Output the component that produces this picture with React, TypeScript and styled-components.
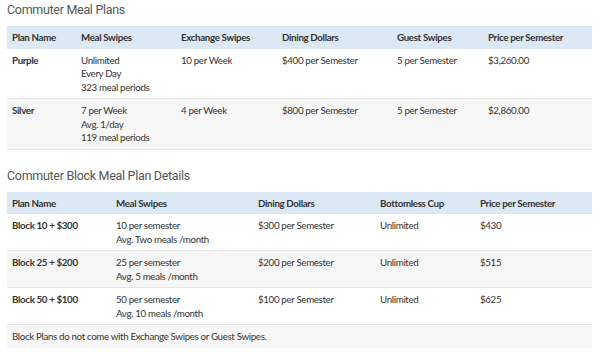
import * as React from "react";
import styled, { createGlobalStyle } from "styled-components";

const GlobalStyle = createGlobalStyle`
  html, body {
    margin: 0;
    padding: 0;
    background: #fff;
  }
`;

const Page = styled.main`
  padding: 0 8px 0 7px;
  font-family: Lato, "Open Sans", sans-serif;
  color: #333;
`;

const Title = styled.h2`
  margin: 0 0 7px;
  height: 19px;
  font-family: Roboto, "Liberation Sans", sans-serif;
  font-weight: normal;
  font-size: 12.5px;
  letter-spacing: -0.3px;
  line-height: 19px;
  color: #555;
`;

const Section = styled.section`
  margin-bottom: 16px;
`;

const Table = styled.table`
  width: 585px;
  border-collapse: collapse;
  table-layout: fixed;
  font-size: 9.75px;
  line-height: 13.5px;
  letter-spacing: -0.35px;
`;

const Col = styled.col<{ $w: number }>`
  width: ${(p) => p.$w}px;
`;

const HeadCell = styled.th`
  background: #dce9f5;
  text-align: left;
  font-weight: 700;
  padding: 5px 5px 4px;
  vertical-align: top;
`;

const Row = styled.tr<{ $shade?: boolean; $last?: boolean }>`
  background: ${(p) => (p.$shade ? "#f7f7f7" : "#fff")};
  border-bottom: ${(p) => (p.$last ? "none" : "1px solid #e4e4e4")};
`;

const Cell = styled.td<{ $bold?: boolean }>`
  padding: 5px 5px 4px;
  vertical-align: top;
  font-weight: ${(p) => (p.$bold ? 700 : 400)};
`;

const Lines = ({ items }: { items: string[] }) => (
  <>
    {items.map((t, i) => (
      <div key={i}>{t}</div>
    ))}
  </>
);

const commuter = [
  {
    name: "Purple",
    swipes: ["Unlimited", "Every Day", "323 meal periods"],
    exchange: "10 per Week",
    dining: "$400 per Semester",
    guest: "5 per Semester",
    price: "$3,260.00",
  },
  {
    name: "Silver",
    swipes: ["7 per Week", "Avg. 1/day", "119 meal periods"],
    exchange: "4 per Week",
    dining: "$800 per Semester",
    guest: "5 per Semester",
    price: "$2,860.00",
  },
];

const blocks = [
  {
    name: "Block 10 + $300",
    swipes: ["10 per semester", "Avg. Two meals /month"],
    dining: "$300 per Semester",
    price: "$430",
  },
  {
    name: "Block 25 + $200",
    swipes: ["25 per semester", "Avg. 5 meals /month"],
    dining: "$200 per Semester",
    price: "$515",
  },
  {
    name: "Block 50 + $100",
    swipes: ["50 per semester", "Avg. 10 meals /month"],
    dining: "$100 per Semester",
    price: "$625",
  },
];

export default function App() {
  return (
    <>
      <GlobalStyle />
      <Page>
        <Section>
          <Title>Commuter Meal Plans</Title>
          <Table>
            <colgroup>
              <Col $w={69} />
              <Col $w={100} />
              <Col $w={101} />
              <Col $w={115} />
              <Col $w={91} />
              <Col $w={109} />
            </colgroup>
            <thead>
              <tr>
                <HeadCell>Plan Name</HeadCell>
                <HeadCell>Meal Swipes</HeadCell>
                <HeadCell>Exchange Swipes</HeadCell>
                <HeadCell>Dining Dollars</HeadCell>
                <HeadCell>Guest Swipes</HeadCell>
                <HeadCell>Price per Semester</HeadCell>
              </tr>
            </thead>
            <tbody>
              {commuter.map((p, i) => (
                <Row key={p.name} $shade={i % 2 === 1}>
                  <Cell $bold>{p.name}</Cell>
                  <Cell>
                    <Lines items={p.swipes} />
                  </Cell>
                  <Cell>{p.exchange}</Cell>
                  <Cell>{p.dining}</Cell>
                  <Cell>{p.guest}</Cell>
                  <Cell>{p.price}</Cell>
                </Row>
              ))}
            </tbody>
          </Table>
        </Section>

        <Section>
          <Title>Commuter Block Meal Plan Details</Title>
          <Table>
            <colgroup>
              <Col $w={104} />
              <Col $w={142} />
              <Col $w={122} />
              <Col $w={100} />
              <Col $w={117} />
            </colgroup>
            <thead>
              <tr>
                <HeadCell>Plan Name</HeadCell>
                <HeadCell>Meal Swipes</HeadCell>
                <HeadCell>Dining Dollars</HeadCell>
                <HeadCell>Bottomless Cup</HeadCell>
                <HeadCell>Price per Semester</HeadCell>
              </tr>
            </thead>
            <tbody>
              {blocks.map((b, i) => (
                <Row key={b.name} $shade={i % 2 === 1}>
                  <Cell $bold>{b.name}</Cell>
                  <Cell>
                    <Lines items={b.swipes} />
                  </Cell>
                  <Cell>{b.dining}</Cell>
                  <Cell>Unlimited</Cell>
                  <Cell>{b.price}</Cell>
                </Row>
              ))}
              <Row $shade $last>
                <Cell colSpan={5}>
                  Block Plans do not come with Exchange Swipes or Guest Swipes.
                </Cell>
              </Row>
            </tbody>
          </Table>
        </Section>
      </Page>
    </>
  );
}
